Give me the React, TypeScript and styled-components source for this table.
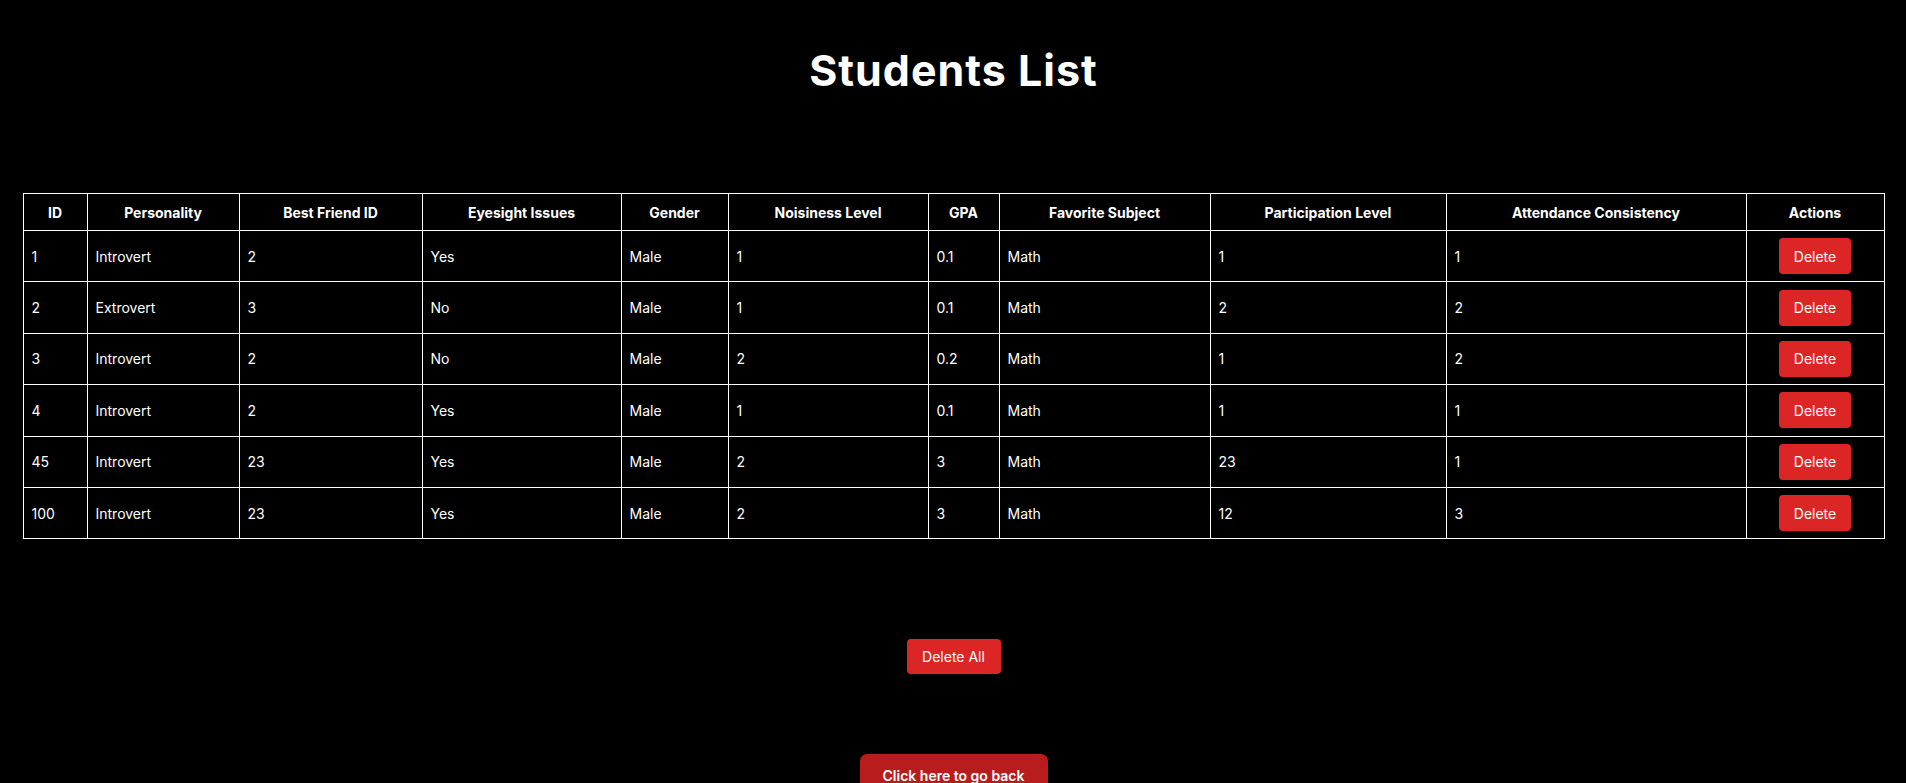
import React from 'react'
import styled, { createGlobalStyle } from 'styled-components'

const GlobalStyle = createGlobalStyle`
  html, body {
    margin: 0;
    padding: 0;
    background: #000;
    color: #fff;
    font-family: Inter, "Liberation Sans", sans-serif;
  }
`

const Page = styled.div`
  display: flex;
  flex-direction: column;
  align-items: center;
  padding: 45px 22px 40px 23px;
`

const Title = styled.h1`
  margin: 0;
  font-size: 43px;
  line-height: 50px;
  font-weight: 700;
  letter-spacing: 1px;
`

const Table = styled.table`
  margin-top: 98px;
  width: 1861px;
  table-layout: fixed;
  border-collapse: collapse;
  font-size: 14px;
`

const HeadCell = styled.th<{ $w: number }>`
  width: ${({ $w }) => $w}px;
  height: 37px;
  padding: 0 8px;
  border: 1px solid #fff;
  font-weight: 700;
  font-size: 14px;
  text-align: center;
  box-sizing: border-box;
`

const Cell = styled.td`
  height: 51.4px;
  padding: 0 8px;
  border: 1px solid #fff;
  text-align: left;
  box-sizing: border-box;
`

const ActionCell = styled(Cell)`
  text-align: center;
`

const RedButton = styled.button<{ $dark?: boolean }>`
  border: none;
  color: #fff;
  cursor: pointer;
  font-family: Inter, "Liberation Sans", sans-serif;
  font-size: 14px;
  background: ${({ $dark }) => ($dark ? '#b91c1c' : '#dc2626')};
`

const RowDelete = styled(RedButton)`
  width: 72px;
  height: 36px;
  border-radius: 4px;
`

const DeleteAll = styled(RedButton)`
  margin-top: 100px;
  width: 94px;
  height: 35px;
  border-radius: 4px;
`

const BackButton = styled(RedButton)`
  margin-top: 80px;
  width: 188px;
  height: 42px;
  border-radius: 7px;
  font-weight: 600;
`

const columns: [string, number][] = [
  ['ID', 64],
  ['Personality', 152],
  ['Best Friend ID', 183],
  ['Eyesight Issues', 199],
  ['Gender', 107],
  ['Noisiness Level', 200],
  ['GPA', 71],
  ['Favorite Subject', 211],
  ['Participation Level', 236],
  ['Attendance Consistency', 300],
  ['Actions', 138],
]

const students = [
  ['1', 'Introvert', '2', 'Yes', 'Male', '1', '0.1', 'Math', '1', '1'],
  ['2', 'Extrovert', '3', 'No', 'Male', '1', '0.1', 'Math', '2', '2'],
  ['3', 'Introvert', '2', 'No', 'Male', '2', '0.2', 'Math', '1', '2'],
  ['4', 'Introvert', '2', 'Yes', 'Male', '1', '0.1', 'Math', '1', '1'],
  ['45', 'Introvert', '23', 'Yes', 'Male', '2', '3', 'Math', '23', '1'],
  ['100', 'Introvert', '23', 'Yes', 'Male', '2', '3', 'Math', '12', '3'],
]

const App: React.FC = () => {
  return (
    <>
      <GlobalStyle />
      <Page>
        <Title>Students List</Title>
        <Table>
          <thead>
            <tr>
              {columns.map(([label, w]) => (
                <HeadCell key={label} $w={w}>{label}</HeadCell>
              ))}
            </tr>
          </thead>
          <tbody>
            {students.map((s) => (
              <tr key={s[0]}>
                {s.map((v, i) => (
                  <Cell key={i}>{v}</Cell>
                ))}
                <ActionCell>
                  <RowDelete>Delete</RowDelete>
                </ActionCell>
              </tr>
            ))}
          </tbody>
        </Table>
        <DeleteAll>Delete All</DeleteAll>
        <BackButton $dark>Click here to go back</BackButton>
      </Page>
    </>
  )
}

export default App
